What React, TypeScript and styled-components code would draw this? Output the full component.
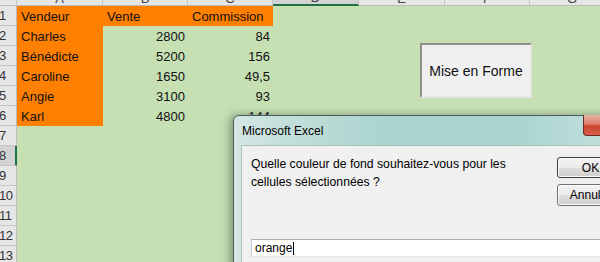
import React from 'react';
import styled, { createGlobalStyle } from 'styled-components';

const GlobalStyle = createGlobalStyle`
  html, body {
    margin: 0;
    padding: 0;
    background: #c6e0b4;
  }
`;

const columns = ['', 'A', 'B', 'C', 'D', 'E', 'F', 'G'];
const activeColumn = 'D';
const activeRow = 8;

const data: string[][] = [
  ['Vendeur', 'Vente', 'Commission'],
  ['Charles', '2800', '84'],
  ['Bénédicte', '5200', '156'],
  ['Caroline', '1650', '49,5'],
  ['Angie', '3100', '93'],
  ['Karl', '4800', '144'],
];

const Screen = styled.div`
  position: relative;
  width: 600px;
  height: 262px;
  overflow: hidden;
  background: #c6e0b4;
  font-family: 'Liberation Sans', Arial, sans-serif;
`;

const Sheet = styled.div`
  display: grid;
  grid-template-columns: 17px 86px 85px 85px 86px 86px 85px 85px;
  grid-auto-rows: 20px;
  margin-top: -14px;
`;

const ColHeader = styled.div<{ $active?: boolean }>`
  display: flex;
  align-items: flex-end;
  justify-content: center;
  box-sizing: border-box;
  padding-bottom: 0;
  line-height: 13px;
  background: ${(p) => (p.$active ? '#d3d3d3' : '#e6e6e6')};
  border-right: 1px solid #c4c4c4;
  border-bottom: ${(p) => (p.$active ? '2px solid #217346' : '1px solid #bcbcbc')};
  color: #444;
  font-size: 13px;
`;

const RowHeader = styled.div<{ $active?: boolean }>`
  display: flex;
  align-items: center;
  box-sizing: border-box;
  background: ${(p) => (p.$active ? '#d3d3d3' : '#e6e6e6')};
  border-bottom: 1px solid #c4c4c4;
  border-right: ${(p) => (p.$active ? '2px solid #217346' : '1px solid #bcbcbc')};
  color: #333;
  font-size: 13px;
  letter-spacing: -0.5px;
  margin-left: -1px;
`;

const Cell = styled.div<{ $fill?: boolean; $right?: boolean }>`
  display: flex;
  align-items: center;
  justify-content: ${(p) => (p.$right ? 'flex-end' : 'flex-start')};
  padding: 1px 3px 0 4px;
  background: ${(p) => (p.$fill ? '#ff8000' : 'transparent')};
  color: #111;
  font-size: 13px;
  white-space: nowrap;
`;

const SheetButton = styled.div`
  position: absolute;
  left: 420px;
  top: 43px;
  width: 112px;
  height: 55px;
  box-sizing: border-box;
  display: flex;
  align-items: center;
  justify-content: center;
  background: #f0f0f0;
  border-top: 2px solid #8f8f8f;
  border-left: 2px solid #8f8f8f;
  border-right: 2px solid #e6e6e6;
  border-bottom: 2px solid #e6e6e6;
  font-size: 14px;
  color: #111;
`;

const Dialog = styled.div`
  position: absolute;
  left: 233px;
  top: 115px;
  width: 405px;
  height: 200px;
  box-sizing: border-box;
  display: flex;
  flex-direction: column;
  padding: 0 8px 0 7px;
  border: 1px solid #4d5d5c;
  border-radius: 6px 6px 0 0;
  background: linear-gradient(90deg, #d6e7e5 0%, #c3dfdb 12%, #a9d3ce 40%, #aad4cf 70%, #c9e3e0 100%);
  box-shadow: -3px 0 9px rgba(40, 60, 40, 0.45);
`;

const TitleBar = styled.div`
  display: flex;
  align-items: flex-start;
  height: 29px;
`;

const Title = styled.div`
  flex: 1;
  align-self: center;
  padding-left: 1px;
  font-size: 12px;
  color: #000;
`;

const CloseButton = styled.div`
  width: 46px;
  height: 21px;
  margin-top: -1px;
  box-sizing: border-box;
  border: 1px solid #6b2a22;
  border-top: none;
  border-radius: 0 0 4px 4px;
  background: linear-gradient(180deg, #eab2a6 0%, #dc7d6b 45%, #c8432f 55%, #d8604c 100%);
`;

const Client = styled.div`
  flex: 1;
  display: flex;
  flex-direction: column;
  border-top: 1px solid #a9c2c0;
  border-left: 1px solid #a9c2c0;
  background: #f0f0f0;
  padding: 9px 0 0 9px;
`;

const TopRow = styled.div`
  display: flex;
`;

const Message = styled.div`
  width: 306px;
  flex: none;
  font-size: 12.2px;
  line-height: 18px;
  color: #000;
`;

const Buttons = styled.div`
  display: flex;
  flex-direction: column;
  gap: 6px;
  margin-top: 2px;
`;

const DialogButton = styled.div<{ $default?: boolean }>`
  width: 67px;
  height: ${(p) => (p.$default ? '21px' : '22px')};
  box-sizing: border-box;
  display: flex;
  align-items: center;
  justify-content: center;
  border: 1px solid ${(p) => (p.$default ? '#3c3c3c' : '#707070')};
  border-radius: 3px;
  box-shadow: inset 0 0 0 1px #fcfcfc;
  background: linear-gradient(180deg, #f2f2f2 0%, #ebebeb 50%, #dddddd 51%, #cfcfcf 100%);
  font-size: 12px;
  color: #000;
`;

const Input = styled.div`
  margin-top: 33px;
  width: 400px;
  height: 18px;
  box-sizing: border-box;
  display: flex;
  align-items: center;
  padding-left: 3px;
  background: #fff;
  border: 1px solid #e3e9ef;
  border-top-color: #abadb3;
  border-left-color: #c8ccd2;
  font-size: 12px;
  color: #000;
`;

const Caret = styled.span`
  display: inline-block;
  width: 1px;
  height: 13px;
  margin-left: 1px;
  background: #000;
`;

const App = () => {
  const rowCount = 13;
  return (
    <Screen>
      <GlobalStyle />
      <Sheet>
        {columns.map((c, i) => (
          <ColHeader key={'h' + i} $active={c === activeColumn}>
            {c}
          </ColHeader>
        ))}
        {Array.from({ length: rowCount }, (_, r) => {
          const n = r + 1;
          const row = data[r];
          return (
            <React.Fragment key={n}>
              <RowHeader $active={n === activeRow}>{n}</RowHeader>
              {columns.slice(1).map((_c, ci) => {
                const value = row ? row[ci] : undefined;
                const fill = !!row && (ci === 0 || (n === 1 && ci < 3));
                const right = !!value && n > 1 && ci > 0;
                return (
                  <Cell key={ci} $fill={fill} $right={right}>
                    {value}
                  </Cell>
                );
              })}
            </React.Fragment>
          );
        })}
      </Sheet>

      <SheetButton>Mise en Forme</SheetButton>

      <Dialog>
        <TitleBar>
          <Title>Microsoft Excel</Title>
          <CloseButton />
        </TitleBar>
        <Client>
          <TopRow>
            <Message>
              Quelle couleur de fond souhaitez-vous pour les
              <br />
              cellules sélectionnées ?
            </Message>
            <Buttons>
              <DialogButton $default>OK</DialogButton>
              <DialogButton>Annuler</DialogButton>
            </Buttons>
          </TopRow>
          <Input>
            orange
            <Caret />
          </Input>
        </Client>
      </Dialog>
    </Screen>
  );
};

export default App;
